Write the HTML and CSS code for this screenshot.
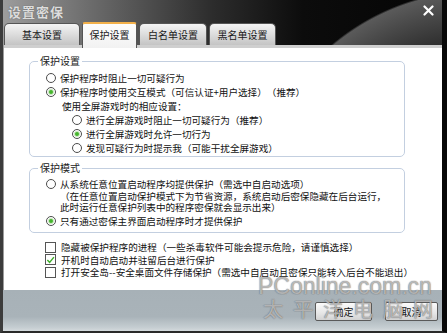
FILE: index.html
```html
<!DOCTYPE html>
<html lang="zh-CN">
<head>
    <meta charset="UTF-8">
    <title>设置密保</title>
    <link rel="stylesheet" href="styles.css">
</head>
<body>
    <div class="window">
        <div class="titlebar">
            <span class="title">设置密保</span>
            <svg class="close" width="11" height="11" viewBox="0 0 11 11">
                <path d="M1.5 1.5 L9.5 9.5 M9.5 1.5 L1.5 9.5" stroke="#fff" stroke-width="2.2" stroke-linecap="round"/>
            </svg>
        </div>
        <div class="tabs">
            <div class="tab tab-1">基本设置</div>
            <div class="tab tab-2 active">保护设置</div>
            <div class="tab tab-3">白名单设置</div>
            <div class="tab tab-4">黑名单设置</div>
        </div>
        <div class="panel">
            <!-- 保护设置 -->
            <fieldset class="group group-1">
                <legend>保护设置</legend>
                <div class="opt"><span class="radio"></span>保护程序时阻止一切可疑行为</div>
                <div class="opt"><span class="radio on"></span>保护程序时使用交互模式（可信认证+用户选择）（推荐）</div>
                <div class="opt sub-label">使用全屏游戏时的相应设置：</div>
                <div class="opt nested"><span class="radio"></span>进行全屏游戏时阻止一切可疑行为（推荐）</div>
                <div class="opt nested"><span class="radio on"></span>进行全屏游戏时允许一切行为</div>
                <div class="opt nested"><span class="radio"></span>发现可疑行为时提示我（可能干扰全屏游戏）</div>
            </fieldset>
            <!-- 保护模式 -->
            <fieldset class="group group-2">
                <legend>保护模式</legend>
                <div class="opt"><span class="radio"></span>从系统任意位置启动程序均提供保护（需选中自启动选项）</div>
                <div class="note">（在任意位置启动保护模式下为节省资源，系统启动后密保隐藏在后台运行，<br>此时运行任意保护列表中的程序密保就会显示出来）</div>
                <div class="opt last"><span class="radio on"></span>只有通过密保主界面启动程序时才提供保护</div>
            </fieldset>
            <div class="checks">
                <div class="check-row"><span class="box"></span>隐藏被保护程序的进程（一些杀毒软件可能会提示危险，请谨慎选择）</div>
                <div class="check-row"><span class="box on"><svg width="10" height="10" viewBox="0 0 10 10"><path d="M1.5 5 L4 7.6 L8.8 1.8" fill="none" stroke="#3fae2a" stroke-width="1.6"/></svg></span>开机时自动启动并驻留后台进行保护</div>
                <div class="check-row"><span class="box"></span>打开安全岛--安全桌面文件存储保护（需选中自启动且密保只能转入后台不能退出）</div>
            </div>
        </div>
        <div class="footer">
            <button class="btn btn-ok">确定</button>
            <button class="btn btn-cancel">取消</button>
        </div>
        <div class="watermark">
            <div class="wm-site">PConline.com.cn</div>
            <div class="wm-name">太平洋电脑网</div>
        </div>
    </div>
</body>
</html>
```

FILE: styles.css
```css
body {
    margin: 0;
    background: #000;
    font-family: "Noto Sans CJK SC", "Noto Sans", sans-serif;
    text-spacing-trim: space-all;
}
.window {
    position: relative;
    width: 447px;
    height: 333px;
    box-sizing: border-box;
    border-left: 3px solid #3c3c3c;
    border-right: 5px solid #080808;
    border-bottom: 2px solid #2a2a2a;
    overflow: hidden;
    background:
        radial-gradient(circle at 477px 220px, #262626 170px, #5a5a5a 228px, transparent 230px),
        linear-gradient(to right, #9c9c9c 0, #6a6a6a 90px, #2c2c2c 210px, #0c0c0c 300px, #050505 100%);
}
.titlebar {
    height: 22px;
    display: flex;
    align-items: center;
    justify-content: space-between;
    padding: 0 8px 0 5px;
}
.title {
    color: #dcdcdc;
    font-size: 13px;
    font-weight: bold;
    letter-spacing: 1px;
    text-shadow: 0 0 1px #555;
}
.close {
    margin-top: -2px;
}
.tabs {
    display: flex;
    gap: 2px;
    height: 23px;
    padding-left: 1px;
    align-items: flex-end;
}
.tab {
    box-sizing: border-box;
    height: 22px;
    display: flex;
    align-items: center;
    justify-content: center;
    font-size: 10px;
    color: #1a1a1a;
    background: linear-gradient(#f4f4f4, #dadada 55%, #c4c4c4);
    border: 1px solid #555;
    border-bottom: none;
    border-radius: 5px 5px 0 0;
}
.tab-1 { width: 76px; }
.tab-2 { width: 55px; }
.tab-3 { width: 68px; }
.tab-4 { width: 67px; }
.tab.active {
    height: 26px;
    margin-bottom: -3px;
    position: relative;
    z-index: 1;
    background: linear-gradient(#fdfdfd, #f2f2f2);
    border-top: 2px solid #f2b04a;
    border-radius: 3px 3px 0 0;
    padding-bottom: 3px;
}
.panel {
    box-sizing: border-box;
    height: 245px;
    margin-left: 1px;
    background: #fff;
    border-top: 3px solid #cfcfcf;
    padding-top: 7px;
    font-size: 9.6px;
    color: #111;
}
.group {
    margin: 0 0 0 25px;
    width: 376px;
    box-sizing: border-box;
    border: 1px solid #c3cfe0;
    border-radius: 5px;
    padding: 4px 0 1px 16px;
}
.group legend {
    margin-left: -8px;
    padding: 0 2px;
    font-size: 10px;
    line-height: 12px;
    color: #222;
}
.group-2 {
    margin-top: 5px;
    padding-top: 3px;
    padding-bottom: 4px;
}
.opt {
    height: 14px;
    line-height: 14px;
    display: flex;
    align-items: center;
    white-space: nowrap;
}
.sub-label {
    padding-left: 16px;
}
.nested {
    padding-left: 26px;
}
.note {
    line-height: 11px;
    padding-left: 14px;
    white-space: nowrap;
}
.opt.last {
    margin-top: 1px;
}
.radio {
    box-sizing: border-box;
    width: 10px;
    height: 10px;
    margin-right: 4px;
    border: 1px solid #4c4c4c;
    border-radius: 50%;
    background: #fff;
    display: flex;
    align-items: center;
    justify-content: center;
    flex-shrink: 0;
}
.radio.on::after {
    content: "";
    width: 4px;
    height: 4px;
    border-radius: 50%;
    background: #45b52c;
    box-shadow: 0 0 0 1px #c9e8c0;
}
.checks {
    margin: 8px 0 0 41px;
}
.check-row {
    height: 12.5px;
    line-height: 12.5px;
    display: flex;
    align-items: center;
    white-space: nowrap;
}
.box {
    box-sizing: border-box;
    width: 11px;
    height: 11px;
    margin-right: 5px;
    border: 1px solid #555;
    background: #fff;
    flex-shrink: 0;
    display: flex;
    align-items: center;
    justify-content: center;
}
.footer {
    box-sizing: border-box;
    height: 41px;
    padding: 12px 4px 0 0;
    display: flex;
    justify-content: flex-end;
    align-items: flex-start;
    gap: 13px;
    background: linear-gradient(#a7b1b7, #a9b3b9 65%, #c6ced2 92%, #d4dadd);
}
.btn {
    height: 19px;
    padding: 0;
    font-family: "Noto Sans CJK SC", sans-serif;
    font-size: 10px;
    color: #111;
    background: linear-gradient(#fbfbfb, #e6e6e6 60%, #d2d2d2);
    border: 1px solid #5a5a5a;
    border-radius: 2px;
}
.btn-ok { width: 57px; }
.btn-cancel { width: 53px; }
.watermark {
    position: absolute;
    left: 250px;
    top: 273px;
    white-space: nowrap;
    pointer-events: none;
    color: rgba(255, 255, 255, 0.5);
    text-shadow: 0 0 1px rgba(90, 90, 90, 0.7), 0 0 1px rgba(90, 90, 90, 0.7);
}
.wm-site {
    font-family: "Liberation Sans", sans-serif;
    font-size: 23px;
    line-height: 26px;
    padding-left: 5px;
}
.wm-name {
    font-size: 20px;
    line-height: 28px;
    letter-spacing: 10px;
    margin-top: -4px;
    padding-left: 10px;
}
```
